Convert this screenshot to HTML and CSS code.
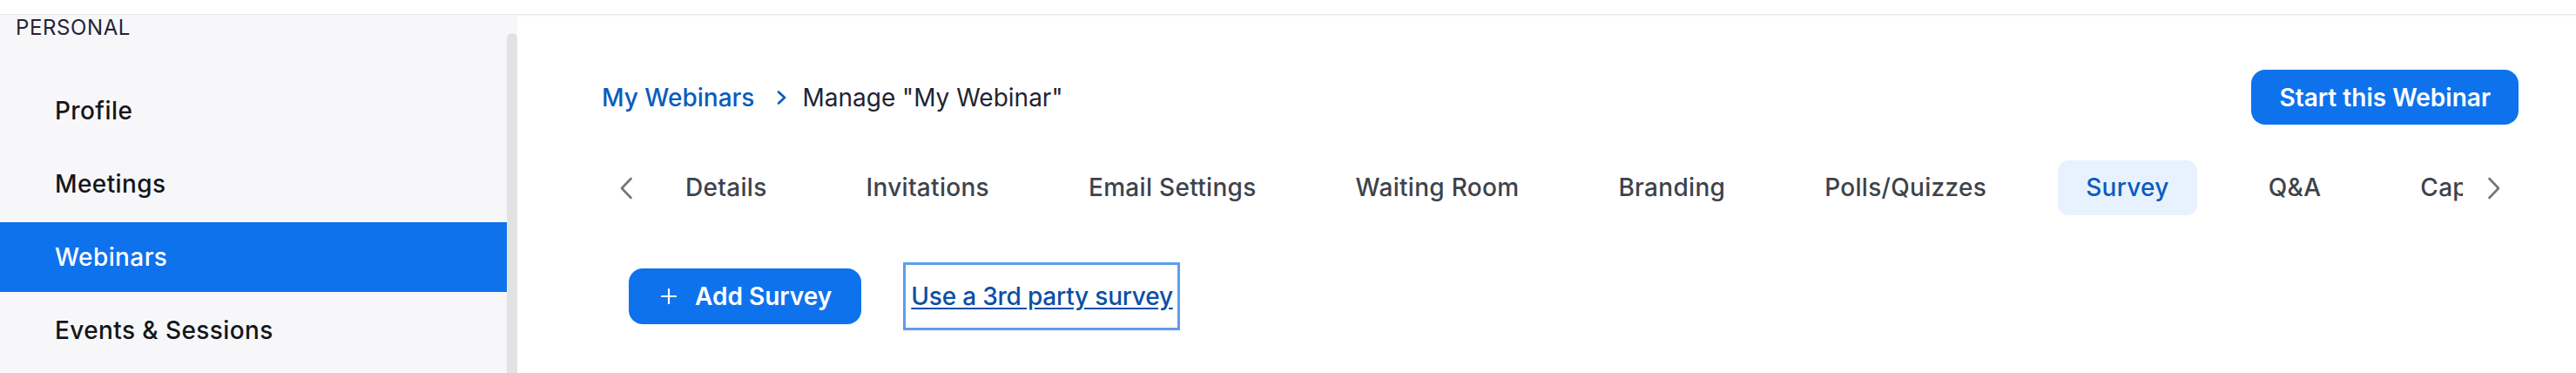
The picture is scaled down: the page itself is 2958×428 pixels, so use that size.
FILE: index.html
```
<!DOCTYPE html>
<html lang="en">
<head>
<meta charset="utf-8">
<title>Manage "My Webinar"</title>
<link rel="stylesheet" href="styles.css">
</head>
<body>
<div class="topbar"></div>
<div class="layout">
  <aside class="sidebar">
    <div class="section-label">PERSONAL</div>
    <nav class="menu">
      <a class="menu-item">Profile</a>
      <a class="menu-item">Meetings</a>
      <a class="menu-item active">Webinars</a>
      <a class="menu-item">Events &amp; Sessions</a>
    </nav>
    <div class="scroll-thumb"></div>
  </aside>
  <main class="main">
    <div class="page-head">
      <div class="breadcrumb">
        <a class="crumb-link">My Webinars</a>
        <svg class="crumb-sep" width="11" height="16" viewBox="0 0 11 16"><polyline points="2,1.5 9,8 2,14.5" fill="none" stroke="#0b5cbd" stroke-width="2.6" stroke-linecap="round" stroke-linejoin="round"/></svg>
        <span class="crumb-current">Manage "My Webinar"</span>
      </div>
      <button class="btn-primary btn-start">Start this Webinar</button>
    </div>
    <div class="tabs-row">
      <button class="tab-arrow">
        <svg width="16" height="26" viewBox="0 0 16 26"><polyline points="13.5,2 3,13 13.5,24" fill="none" stroke="#6f7680" stroke-width="2.6" stroke-linecap="round" stroke-linejoin="round"/></svg>
      </button>
      <div class="tabs-viewport">
        <div class="tabs">
          <span class="tab">Details</span>
          <span class="tab">Invitations</span>
          <span class="tab">Email Settings</span>
          <span class="tab">Waiting Room</span>
          <span class="tab">Branding</span>
          <span class="tab">Polls/Quizzes</span>
          <span class="tab active">Survey</span>
          <span class="tab">Q&amp;A</span>
          <span class="tab">Captions</span>
        </div>
      </div>
      <button class="tab-arrow">
        <svg width="16" height="26" viewBox="0 0 16 26"><polyline points="2.5,2 13,13 2.5,24" fill="none" stroke="#6f7680" stroke-width="2.6" stroke-linecap="round" stroke-linejoin="round"/></svg>
      </button>
    </div>
    <div class="survey-actions">
      <button class="btn-primary btn-add">
        <svg class="plus" width="18" height="18" viewBox="0 0 18 18"><path d="M9 1v16M1 9h16" stroke="#fff" stroke-width="2.2" stroke-linecap="round"/></svg>
        <span>Add Survey</span>
      </button>
      <a class="third-party">Use a 3rd party survey</a>
    </div>
  </main>
</div>
</body>
</html>
```
FILE: styles.css
```
* { box-sizing: border-box; }
html, body { margin: 0; padding: 0; }
body {
  width: 2958px;
  height: 428px;
  overflow: hidden;
  background: #ffffff;
  font-family: Inter, "Noto Sans", sans-serif;
  color: #131619;
}
.topbar {
  height: 17px;
  background: #ffffff;
  border-bottom: 1px solid #e6e6e8;
  box-shadow: 0 1px 2px rgba(0,0,0,0.04);
}
.layout {
  display: flex;
  height: 411px;
}
.sidebar {
  position: relative;
  width: 594px;
  flex: none;
  background: #f7f7fa;
  overflow: hidden;
}
.section-label {
  padding-left: 18px;
  font-size: 24px;
  line-height: 29px;
  letter-spacing: 0.6px;
  color: #232333;
  font-weight: 400;
}
.menu {
  margin-top: 41px;
  display: flex;
  flex-direction: column;
  gap: 4px;
  width: 582px;
}
.menu-item {
  display: block;
  height: 80px;
  line-height: 80px;
  padding-left: 63px;
  font-size: 28px;
  font-weight: 500;
  letter-spacing: 0.4px;
  color: #131619;
}
.menu-item.active {
  background: #0e72ed;
  color: #ffffff;
}
.scroll-thumb {
  position: absolute;
  right: 0;
  top: 21px;
  width: 12px;
  height: 420px;
  border-radius: 6px;
  background: #e2e2e4;
}
.main {
  flex: 1;
  min-width: 0;
  padding: 63px 66px 0 97px;
}
.page-head {
  display: flex;
  justify-content: space-between;
  align-items: center;
  height: 63px;
}
.breadcrumb {
  display: flex;
  align-items: center;
  font-size: 28px;
}
.crumb-link {
  color: #0b5cbd;
  font-weight: 500;
}
.crumb-sep {
  margin: 0 18px 0 26px;
}
.crumb-current {
  color: #232333;
  font-weight: 400;
}
.btn-primary {
  border: none;
  background: #0e72ed;
  color: #ffffff;
  font-family: inherit;
  font-size: 28px;
  font-weight: 600;
  border-radius: 16px;
  cursor: pointer;
}
.btn-start {
  height: 63px;
  padding: 0 32px;
}
.tabs-row {
  margin-top: 41px;
  display: flex;
  align-items: center;
  height: 63px;
}
.tab-arrow {
  width: 56px;
  height: 63px;
  flex: none;
  border: none;
  background: transparent;
  display: flex;
  align-items: center;
  justify-content: center;
  padding: 0;
}
.tabs-viewport {
  flex: 1;
  min-width: 0;
  overflow: hidden;
  margin: 0 8px;
  height: 63px;
}
.tabs {
  display: flex;
  gap: 50px;
  white-space: nowrap;
}
.tab {
  flex: none;
  height: 63px;
  line-height: 63px;
  padding: 0 32px;
  font-size: 28px;
  font-weight: 500;
  letter-spacing: 0.3px;
  color: #3d434b;
  border-radius: 12px;
}
.tab.active {
  background: #e8f2fe;
  color: #0b5cbd;
}
.survey-actions {
  margin-top: 54px;
  padding-left: 31px;
  display: flex;
  align-items: center;
  gap: 48px;
}
.btn-add {
  height: 64px;
  padding: 0 34px 0 37px;
  display: flex;
  align-items: center;
  gap: 21px;
}
.third-party {
  display: inline-block;
  border: 3px solid #5e9ded;
  height: 78px;
  line-height: 72px;
  padding: 0 5px 0 6px;
  font-size: 28px;
  font-weight: 500;
  letter-spacing: -0.2px;
  color: #0b4fa6;
  text-decoration: underline;
  text-underline-offset: 3px;
}
```
